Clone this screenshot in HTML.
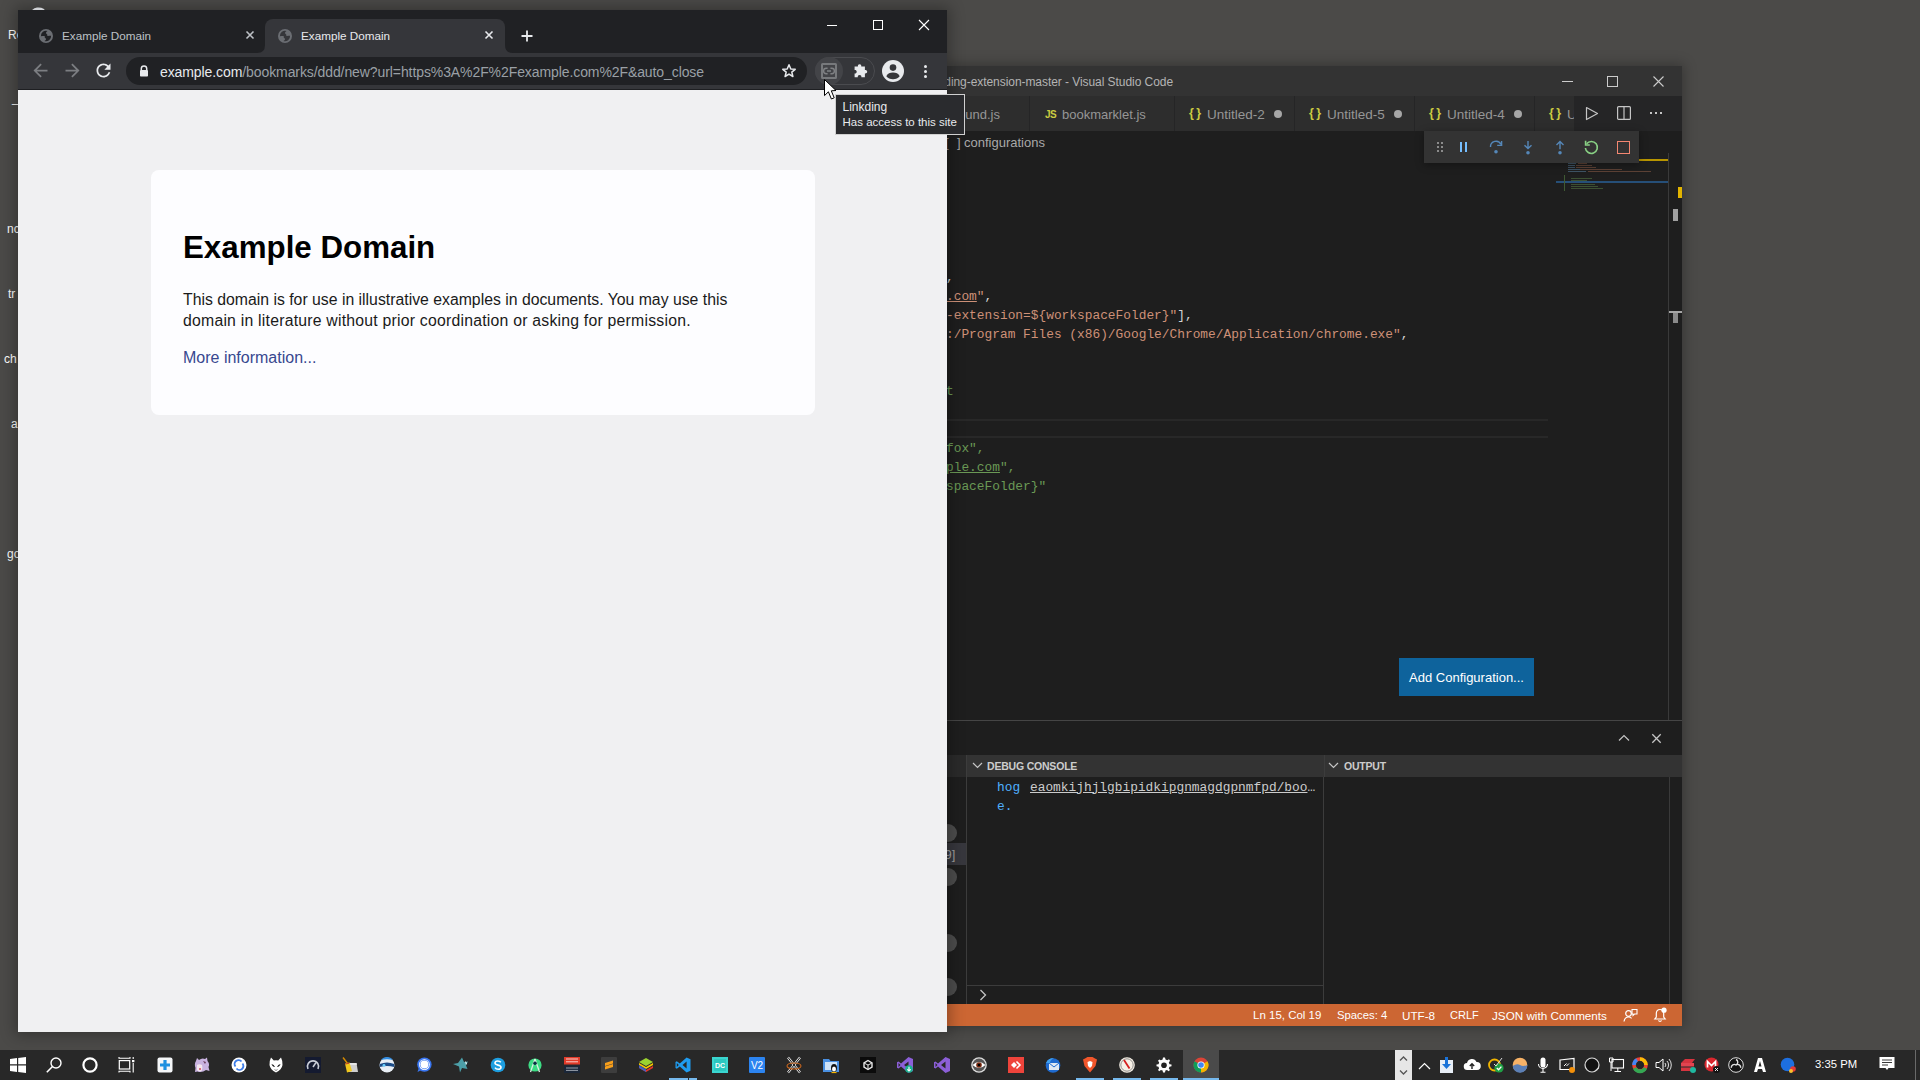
<!DOCTYPE html>
<html><head><meta charset="utf-8">
<style>
*{margin:0;padding:0;box-sizing:border-box}
html,body{width:1920px;height:1080px;overflow:hidden;background:#4b4a48;font-family:"Liberation Sans",sans-serif}
.a{position:absolute}
.t{position:absolute;white-space:nowrap;line-height:1}
.mono{font-family:"Liberation Mono",monospace}
svg{position:absolute;overflow:visible}
</style></head><body>

<div class="a" style="left:0;top:0;width:1920px;height:1050px;background:#4b4a48"></div>
<div class="t" style="left:8px;top:29px;font-size:12px;color:#fff">Re</div>
<div class="t" style="left:12px;top:92px;font-size:12px;color:#fff">_</div>
<div class="t" style="left:7px;top:223px;font-size:12px;color:#fff">nc</div>
<div class="t" style="left:8px;top:288px;font-size:12px;color:#fff">tr</div>
<div class="t" style="left:4px;top:353px;font-size:12px;color:#fff">ch</div>
<div class="t" style="left:11px;top:418px;font-size:12px;color:#fff">a</div>
<div class="t" style="left:7px;top:548px;font-size:12px;color:#fff">go</div>
<div class="a" style="left:947px;top:66px;width:735px;height:960px;box-shadow:0 0 12px 2px rgba(0,0,0,.28)"></div>
<div id="vsc" class="a" style="left:900px;top:66px;width:782px;height:960px;background:#1e1e1e;overflow:hidden">
<div class="a" style="left:0;top:0;width:782px;height:30px;background:#333333"></div>
<div class="t" style="left:-27px;top:9.5px;font-size:12px;color:#b4b4b4;width:300px;text-align:right;letter-spacing:-0.06px">ding-extension-master - Visual Studio Code</div>
<div class="a" style="left:662px;top:15px;width:11px;height:1px;background:#cccccc"></div>
<div class="a" style="left:707px;top:10px;width:11px;height:11px;border:1px solid #cccccc"></div>
<svg style="left:753px;top:10px" width="11" height="11"><path d="M0.5 0.5 L10.5 10.5 M10.5 0.5 L0.5 10.5" stroke="#cccccc" stroke-width="1.1"/></svg>
<div class="a" style="left:0;top:30px;width:782px;height:35px;background:#252526"></div>
<div class="a" style="left:1px;top:30px;width:129px;height:35px;background:#2d2d2d;border-right:1px solid #252526"></div>
<div class="a" style="left:130px;top:30px;width:145px;height:35px;background:#2d2d2d;border-right:1px solid #252526"></div>
<div class="a" style="left:275px;top:30px;width:120px;height:35px;background:#2d2d2d;border-right:1px solid #252526"></div>
<div class="a" style="left:395px;top:30px;width:120px;height:35px;background:#2d2d2d;border-right:1px solid #252526"></div>
<div class="a" style="left:515px;top:30px;width:120px;height:35px;background:#2d2d2d;border-right:1px solid #252526"></div>
<div class="a" style="left:635px;top:30px;width:40px;height:35px;background:#2d2d2d;border-right:1px solid #252526"></div>
<div class="t" style="left:-100px;width:200px;text-align:right;top:42.2px;font-size:13px;color:#969696">background.js</div>
<div class="t" style="left:145px;top:43.7px;font-size:10px;font-weight:bold;color:#cbcb41;letter-spacing:-0.5px">JS</div>
<div class="t" style="left:162px;top:42.2px;font-size:13px;color:#969696">bookmarklet.js</div>
<div class="t" style="left:289px;top:40.7px;font-size:12.5px;color:#cbcb41;letter-spacing:2.5px;font-weight:bold">{}</div>
<div class="t" style="left:307px;top:42.2px;font-size:13.5px;color:#969696">Untitled-2</div>
<div class="a" style="left:374px;top:44px;width:8px;height:8px;border-radius:4px;background:#a6a6a6"></div>
<div class="t" style="left:409px;top:40.7px;font-size:12.5px;color:#cbcb41;letter-spacing:2.5px;font-weight:bold">{}</div>
<div class="t" style="left:427px;top:42.2px;font-size:13.5px;color:#969696">Untitled-5</div>
<div class="a" style="left:494px;top:44px;width:8px;height:8px;border-radius:4px;background:#a6a6a6"></div>
<div class="t" style="left:529px;top:40.7px;font-size:12.5px;color:#cbcb41;letter-spacing:2.5px;font-weight:bold">{}</div>
<div class="t" style="left:547px;top:42.2px;font-size:13.5px;color:#969696">Untitled-4</div>
<div class="a" style="left:614px;top:44px;width:8px;height:8px;border-radius:4px;background:#a6a6a6"></div>
<div class="t" style="left:649px;top:40.7px;font-size:12.5px;color:#cbcb41;letter-spacing:2.5px;font-weight:bold">{}</div>
<div class="a" style="left:667px;top:30px;width:7px;height:35px;overflow:hidden"><div class="t" style="left:0;top:12.200000000000003px;font-size:13.5px;color:#969696">Untitled-3</div></div>
<div class="a" style="left:674px;top:30px;width:108px;height:35px;background:#252526"></div>
<svg style="left:685px;top:40px" width="14" height="15" viewBox="0 0 14 15"><path d="M1.5 1.5 L12.5 7.5 L1.5 13.5 Z" fill="none" stroke="#c5c5c5" stroke-width="1.2" stroke-linejoin="round"/></svg>
<svg style="left:717px;top:40px" width="14" height="14" viewBox="0 0 14 14"><rect x="0.6" y="0.6" width="12.8" height="12.8" rx="1" fill="none" stroke="#c5c5c5" stroke-width="1.2"/><path d="M7 0.6 V13.4" stroke="#c5c5c5" stroke-width="1.2"/></svg>
<div class="a" style="left:750px;top:46px;width:2.2px;height:2.2px;background:#c5c5c5"></div>
<div class="a" style="left:755px;top:46px;width:2.2px;height:2.2px;background:#c5c5c5"></div>
<div class="a" style="left:760px;top:46px;width:2.2px;height:2.2px;background:#c5c5c5"></div>
<div class="a" style="left:0;top:65px;width:782px;height:654px;background:#1e1e1e"></div>
<div class="t" style="left:45px;top:69.5px;font-size:13px;color:#a9a9a9">[</div>
<div class="t" style="left:57px;top:69.5px;font-size:13px;color:#a9a9a9">]</div>
<div class="t" style="left:64px;top:69.5px;font-size:13px;color:#a9a9a9">configurations</div>
<div class="a" style="left:0;top:353px;width:648px;height:19px;border-top:2px solid #282828;border-bottom:2px solid #282828"></div>
<div class="t mono" style="left:46px;top:205.7px;font-size:12.85px;color:#d4d4d4">,</div>
<div class="t mono" style="left:46px;top:224.7px;font-size:12.85px;color:#ce9178"><span style="text-decoration:underline">.com</span>"<span style="color:#d4d4d4">,</span></div>
<div class="t mono" style="left:46px;top:243.7px;font-size:12.85px;color:#ce9178">-extension=${workspaceFolder}"<span style="color:#d4d4d4">],</span></div>
<div class="t mono" style="left:46px;top:262.7px;font-size:12.85px;color:#ce9178">:/Program Files (x86)/Google/Chrome/Application/chrome.exe"<span style="color:#d4d4d4">,</span></div>
<div class="t mono" style="left:46px;top:319.7px;font-size:12.85px;color:#6a9955">t</div>
<div class="t mono" style="left:46px;top:376.7px;font-size:12.85px;color:#6a9955">fox",</div>
<div class="t mono" style="left:46px;top:395.7px;font-size:12.85px;color:#6a9955"><span style="text-decoration:underline">ple.com</span>",</div>
<div class="t mono" style="left:46px;top:414.7px;font-size:12.85px;color:#6a9955">spaceFolder}"</div>
<div class="a" style="left:656px;top:93px;width:112px;height:2px;background:#b89500"></div>
<div class="a" style="left:656px;top:115px;width:112px;height:2px;background:#264f78"></div>
<div class="a" style="left:668px;top:97px;width:8px;height:1px;background:#5a7f9e;opacity:.55"></div>
<div class="a" style="left:678px;top:97px;width:9px;height:1px;background:#8f5f48;opacity:.55"></div>
<div class="a" style="left:668px;top:99px;width:7px;height:1px;background:#5a7f9e;opacity:.55"></div>
<div class="a" style="left:676px;top:99px;width:16px;height:1px;background:#8f5f48;opacity:.55"></div>
<div class="a" style="left:668px;top:101px;width:7px;height:1px;background:#5a7f9e;opacity:.55"></div>
<div class="a" style="left:676px;top:101px;width:20px;height:1px;background:#8f5f48;opacity:.55"></div>
<div class="a" style="left:668px;top:103px;width:12px;height:1px;background:#5a7f9e;opacity:.55"></div>
<div class="a" style="left:680px;top:103px;width:42px;height:1px;background:#8f5f48;opacity:.55"></div>
<div class="a" style="left:668px;top:105px;width:18px;height:1px;background:#5a7f9e;opacity:.55"></div>
<div class="a" style="left:688px;top:105px;width:63px;height:1px;background:#8f5f48;opacity:.55"></div>
<div class="a" style="left:671px;top:112px;width:21px;height:1px;background:#557a44;opacity:.55"></div>
<div class="a" style="left:671px;top:114px;width:16px;height:1px;background:#557a44;opacity:.55"></div>
<div class="a" style="left:671px;top:118px;width:24px;height:1px;background:#557a44;opacity:.55"></div>
<div class="a" style="left:671px;top:120px;width:27px;height:1px;background:#557a44;opacity:.55"></div>
<div class="a" style="left:671px;top:122px;width:32px;height:1px;background:#557a44;opacity:.55"></div>
<div class="a" style="left:664px;top:109px;width:1px;height:16px;background:#3f5a33"></div>
<div class="a" style="left:768px;top:87px;width:1px;height:567px;background:#3a3a3a"></div>
<div class="a" style="left:778px;top:121px;width:4px;height:11px;background:#e2b400"></div>
<div class="a" style="left:773px;top:143px;width:5px;height:12px;background:#a0a0a0"></div>
<div class="a" style="left:769px;top:245px;width:13px;height:2px;background:#a6a6a6"></div>
<div class="a" style="left:773px;top:247px;width:5px;height:10px;background:#8a8a8a"></div>
<div class="a" style="left:524px;top:65px;width:215px;height:32px;background:#333333;box-shadow:0 2px 8px rgba(0,0,0,.36)"></div>
<div class="a" style="left:537px;top:76px;width:2px;height:2px;background:#8b8b8b"></div>
<div class="a" style="left:537px;top:80px;width:2px;height:2px;background:#8b8b8b"></div>
<div class="a" style="left:537px;top:84px;width:2px;height:2px;background:#8b8b8b"></div>
<div class="a" style="left:541px;top:76px;width:2px;height:2px;background:#8b8b8b"></div>
<div class="a" style="left:541px;top:80px;width:2px;height:2px;background:#8b8b8b"></div>
<div class="a" style="left:541px;top:84px;width:2px;height:2px;background:#8b8b8b"></div>
<div class="a" style="left:559.5px;top:76px;width:2.2px;height:10px;background:#75beff"></div>
<div class="a" style="left:565px;top:76px;width:2.2px;height:10px;background:#75beff"></div>
<svg style="left:587.5px;top:73px" width="16" height="16" viewBox="0 0 16 16"><path d="M2.5 8 A5.5 5.5 0 0 1 13 5.5" fill="none" stroke="#5587b8" stroke-width="1.4"/><path d="M13.6 2 V6.4 H9.2" fill="none" stroke="#5587b8" stroke-width="1.4"/><circle cx="8" cy="12.8" r="1.8" fill="#5587b8"/></svg>
<svg style="left:619.5px;top:73.5px" width="16" height="16" viewBox="0 0 16 16"><path d="M8 1 V8.6 M4.5 5.2 L8 8.6 L11.5 5.2" fill="none" stroke="#5587b8" stroke-width="1.4"/><circle cx="8" cy="12.8" r="1.8" fill="#5587b8"/></svg>
<svg style="left:651.5px;top:73.5px" width="16" height="16" viewBox="0 0 16 16"><path d="M8 9.2 V1.6 M4.5 5 L8 1.6 L11.5 5" fill="none" stroke="#5587b8" stroke-width="1.4"/><circle cx="8" cy="12.8" r="1.8" fill="#5587b8"/></svg>
<svg style="left:683px;top:73px" width="16" height="16" viewBox="0 0 16 16"><path d="M3.6 4.8 A6 6 0 1 1 2.4 9" fill="none" stroke="#89d185" stroke-width="1.6"/><path d="M2.6 1.8 V6 H6.8" fill="none" stroke="#89d185" stroke-width="1.6"/></svg>
<div class="a" style="left:717px;top:75px;width:13px;height:12.5px;border:1.5px solid #f48771"></div>
<div class="a" style="left:499px;top:592px;width:135px;height:38px;background:#0e639c"></div>
<div class="t" style="left:499px;top:605px;width:135px;text-align:center;font-size:13px;color:#ffffff">Add Configuration...</div>
<div class="a" style="left:0;top:654px;width:782px;height:284px;background:#1e1e1e;border-top:1px solid #454545"></div>
<svg style="left:718px;top:668px" width="12" height="8"><path d="M1 6.5 L6 1.5 L11 6.5" fill="none" stroke="#c5c5c5" stroke-width="1.2"/></svg>
<svg style="left:751px;top:667px" width="11" height="11"><path d="M1.3 1.3 L9.7 9.7 M9.7 1.3 L1.3 9.7" stroke="#c5c5c5" stroke-width="1.3"/></svg>
<div class="a" style="left:0;top:689px;width:66px;height:22px;background:#2a2a2a"></div>
<div class="a" style="left:66px;top:689px;width:358px;height:22px;background:#333333;border-left:1px solid #3c3c3c"></div>
<div class="a" style="left:424px;top:689px;width:358px;height:22px;background:#333333;border-left:1px solid #3c3c3c"></div>
<svg style="left:72px;top:696px" width="11" height="7"><path d="M1 1 L5.5 5.5 L10 1" fill="none" stroke="#c5c5c5" stroke-width="1.2"/></svg>
<div class="t" style="left:87px;top:694.5px;font-size:10.5px;font-weight:bold;color:#cccccc;letter-spacing:-0.2px">DEBUG CONSOLE</div>
<svg style="left:428px;top:696px" width="11" height="7"><path d="M1 1 L5.5 5.5 L10 1" fill="none" stroke="#c5c5c5" stroke-width="1.2"/></svg>
<div class="t" style="left:444px;top:694.5px;font-size:10.5px;font-weight:bold;color:#cccccc;letter-spacing:-0.2px">OUTPUT</div>
<div class="a" style="left:66px;top:711px;width:1px;height:227px;background:#3c3c3c"></div>
<div class="a" style="left:423px;top:711px;width:1px;height:227px;background:#3c3c3c"></div>
<div class="a" style="left:66px;top:919px;width:357px;height:1px;background:#3c3c3c"></div>
<div class="a" style="left:769px;top:711px;width:1px;height:227px;background:#3a3a3a"></div>
<div class="a" style="left:0;top:777px;width:66px;height:22px;background:#37373d"></div>
<div class="t" style="left:41px;top:781.5px;font-size:13px;color:#a0a0a0">[9]</div>
<div class="a" style="left:39px;top:758px;width:18px;height:18px;border-radius:9px;background:#4d4d4d"></div>
<div class="a" style="left:39px;top:802px;width:18px;height:18px;border-radius:9px;background:#4d4d4d"></div>
<div class="a" style="left:39px;top:868px;width:18px;height:18px;border-radius:9px;background:#4d4d4d"></div>
<div class="a" style="left:39px;top:912px;width:18px;height:18px;border-radius:9px;background:#4d4d4d"></div>
<div class="t mono" style="left:97px;top:715.7px;font-size:12.85px;color:#4fb0ff">hog</div>
<div class="t mono" style="left:130px;top:715.7px;font-size:12.85px;color:#cccccc"><span style="text-decoration:underline">eaomkijhjlgbipidkipgnmagdgpnmfpd/boo</span>…</div>
<div class="t mono" style="left:97px;top:734.7px;font-size:12.85px;color:#4fb0ff">e.</div>
<svg style="left:79px;top:923px" width="8" height="12"><path d="M1.5 1 L6.5 6 L1.5 11" fill="none" stroke="#c5c5c5" stroke-width="1.3"/></svg>
<div class="a" style="left:0;top:938px;width:782px;height:22px;background:#cc6633"></div>
<div class="t" style="left:353px;top:943.76525px;font-size:11.5px;color:#ffffff">Ln 15, Col 19</div>
<div class="t" style="left:437px;top:943.76525px;font-size:11.3px;color:#ffffff">Spaces: 4</div>
<div class="t" style="left:502px;top:943.76525px;font-size:11.7px;color:#ffffff">UTF-8</div>
<div class="t" style="left:550px;top:943.76525px;font-size:11px;color:#ffffff">CRLF</div>
<div class="t" style="left:592px;top:943.76525px;font-size:11.7px;color:#ffffff">JSON with Comments</div>
<svg style="left:723px;top:942px" width="15" height="15" viewBox="0 0 15 15"><circle cx="5.5" cy="5.5" r="2.8" fill="none" stroke="#fff" stroke-width="1.2"/><path d="M1 13.5 C1.5 10.5 3.5 9 5.5 9 C7 9 8 9.6 8.6 10.4" fill="none" stroke="#fff" stroke-width="1.2"/><path d="M9 1.5 H14 V6 H11.5 L10 7.5 V6 H9 Z" fill="none" stroke="#fff" stroke-width="1.1"/></svg>
<svg style="left:753px;top:941px" width="15" height="16" viewBox="0 0 15 16"><path d="M7 2.5 C4.5 2.5 3.3 4.3 3.3 6.5 V10 L1.8 12 H12.2 L10.7 10 V6.5 C10.7 4.3 9.5 2.5 7 2.5Z" fill="none" stroke="#fff" stroke-width="1.2"/><path d="M5.5 13.4 A1.6 1.6 0 0 0 8.5 13.4" fill="none" stroke="#fff" stroke-width="1.2"/><circle cx="11" cy="3.2" r="2.6" fill="#fff"/></svg>
</div>

<div class="a" style="left:18px;top:10px;width:929px;height:1022px;box-shadow:0 0 14px 3px rgba(0,0,0,.30)"></div>
<div id="chr" class="a" style="left:18px;top:10px;width:929px;height:1022px;background:#f0f0f2;overflow:hidden">
  <div class="a" style="left:0;top:0;width:929px;height:43px;background:#202124"></div>
  <div class="a" style="left:0;top:43px;width:929px;height:37px;background:#35363a"></div>
  <div class="a" style="left:0;top:79px;width:929px;height:1px;background:#1e1f22"></div>
  <!-- active tab -->
  <div class="a" style="left:247px;top:9px;width:240px;height:36px;background:#35363a;border-radius:8px 8px 0 0"></div>
  <svg style="left:239px;top:35px" width="8" height="8"><path d="M0 8 Q8 8 8 0 L8 8 Z" fill="#35363a"/></svg>
  <svg style="left:487px;top:35px" width="8" height="8"><path d="M8 8 Q0 8 0 0 L0 8 Z" fill="#35363a"/></svg>
  <!-- tab1 -->
  <svg style="left:21px;top:19px" width="14" height="14" viewBox="0 0 14 14"><circle cx="7" cy="7" r="7" fill="#6b6e73"/><path d="M1.9 7.2 A5.2 5.2 0 0 1 8.6 1.9 C7.4 2.6 6.6 3.6 7.2 4.6 C7.8 5.4 8.8 5.6 8.4 6.6 C8 7.3 6.6 7.1 5.2 7.1 C4 7.1 2.9 7.2 1.9 7.2Z" fill="#202124"/><path d="M12.1 6.8 A5.2 5.2 0 0 1 5.4 12.1 C6.6 11.4 7.4 10.4 6.8 9.4 C6.2 8.6 5.2 8.4 5.6 7.4 C6 6.7 7.4 6.9 8.8 6.9 C10 6.9 11.1 6.8 12.1 6.8Z" fill="#202124"/></svg>
  <div class="t" style="left:44px;top:20px;font-size:11.7px;color:#bdc1c6">Example Domain</div>
  <svg style="left:227px;top:20px" width="10" height="10"><path d="M1.5 1.5 L8.5 8.5 M8.5 1.5 L1.5 8.5" stroke="#bdc1c6" stroke-width="1.6"/></svg>
  <!-- tab2 -->
  <svg style="left:260px;top:19px" width="14" height="14" viewBox="0 0 14 14"><circle cx="7" cy="7" r="7" fill="#6b6e73"/><path d="M1.9 7.2 A5.2 5.2 0 0 1 8.6 1.9 C7.4 2.6 6.6 3.6 7.2 4.6 C7.8 5.4 8.8 5.6 8.4 6.6 C8 7.3 6.6 7.1 5.2 7.1 C4 7.1 2.9 7.2 1.9 7.2Z" fill="#35363a"/><path d="M12.1 6.8 A5.2 5.2 0 0 1 5.4 12.1 C6.6 11.4 7.4 10.4 6.8 9.4 C6.2 8.6 5.2 8.4 5.6 7.4 C6 6.7 7.4 6.9 8.8 6.9 C10 6.9 11.1 6.8 12.1 6.8Z" fill="#35363a"/></svg>
  <div class="t" style="left:283px;top:20px;font-size:11.7px;color:#e8eaed">Example Domain</div>
  <svg style="left:466px;top:20px" width="10" height="10"><path d="M1.5 1.5 L8.5 8.5 M8.5 1.5 L1.5 8.5" stroke="#e8eaed" stroke-width="1.6"/></svg>
  <!-- new tab -->
  <svg style="left:503px;top:20px" width="12" height="12"><path d="M6 0.5 V11.5 M0.5 6 H11.5" stroke="#e8eaed" stroke-width="1.8"/></svg>
  <!-- window controls -->
  <div class="a" style="left:809px;top:15px;width:10px;height:1px;background:#fff"></div>
  <div class="a" style="left:855px;top:10px;width:10px;height:10px;border:1px solid #fff"></div>
  <svg style="left:901px;top:10px" width="10" height="10"><path d="M0 0 L10 10 M10 0 L0 10" stroke="#fff" stroke-width="1.1"/></svg>
  <!-- nav -->
  <svg style="left:11.5px;top:50.25px" width="21" height="21" viewBox="0 0 24 24"><path d="M20 11H7.83l5.59-5.59L12 4l-8 8 8 8 1.41-1.41L7.83 13H20v-2z" fill="#7c7e82"/></svg>
  <svg style="left:43.5px;top:50.25px" width="21" height="21" viewBox="0 0 24 24"><path d="M12 4l-1.41 1.41L16.17 11H4v2h12.17l-5.58 5.59L12 20l8-8z" fill="#7c7e82"/></svg>
  <svg style="left:75px;top:50px" width="21" height="21" viewBox="0 0 24 24"><path d="M17.65 6.35C16.2 4.9 14.21 4 12 4c-4.42 0-7.99 3.58-7.99 8s3.57 8 7.99 8c3.73 0 6.84-2.55 7.73-6h-2.08c-.82 2.33-3.04 4-5.650 4-3.31 0-6-2.69-6-6s2.69-6 6-6c1.66 0 3.14.69 4.22 1.78L13 11h7V4l-2.35 2.35z" fill="#e8eaed"/></svg>
  <!-- omnibox -->
  <div class="a" style="left:108px;top:47px;width:681px;height:28px;background:#202124;border-radius:14px"></div>
  <svg style="left:121px;top:54.5px" width="10" height="12" viewBox="0 0 10 12"><path d="M2.3 5 V3.6 A2.7 2.7 0 0 1 7.7 3.6 V5" fill="none" stroke="#e8eaed" stroke-width="1.5"/><rect x="1" y="5" width="8" height="6.5" rx="0.8" fill="#e8eaed"/></svg>
  <div class="t" style="left:142px;top:54.7px;font-size:14px;letter-spacing:-0.09px;color:#9aa0a6"><span style="color:#e8eaed">example.com</span>/bookmarks/ddd/new?url=https%3A%2F%2Fexample.com%2F&amp;auto_close</div>
  <svg style="left:763px;top:53px" width="16" height="16" viewBox="0 0 16 16"><path d="M8 1.8 L9.8 6 L14.2 6.3 L10.8 9.1 L11.9 13.5 L8 11.1 L4.1 13.5 L5.2 9.1 L1.8 6.3 L6.2 6 Z" fill="none" stroke="#e8eaed" stroke-width="1.5" stroke-linejoin="round"/></svg>
  <!-- extensions -->
  <div class="a" style="left:797px;top:47px;width:60px;height:28px;border:1px solid #4a4b4f;border-radius:14px"></div>
  <div class="a" style="left:797px;top:47px;width:28px;height:28px;background:#434448;border-radius:14px"></div>
  <div class="a" style="left:803px;top:53px;width:16px;height:16px;border:2px solid #77797c;border-radius:1.5px"></div>
  <svg style="left:805px;top:57px" width="12" height="8" viewBox="0 0 12 8"><path d="M4.6 1.3 H3.3 A2.7 2.7 0 0 0 3.3 6.7 H4.6 M7.4 1.3 H8.7 A2.7 2.7 0 0 1 8.7 6.7 H7.4 M4 4 H8" fill="none" stroke="#7f8184" stroke-width="1.4"/></svg>
  <svg style="left:835px;top:53px" width="16" height="16" viewBox="0 0 16 16"><path d="M6.6 1.3 C7.8 1.3 8.4 2.2 8.3 3.4 H11.9 V7 C13.1 6.9 14.2 7.4 14.2 8.7 C14.2 10 13.1 10.5 11.9 10.4 V14.2 H8.4 C8.5 13 7.9 12.1 6.6 12.1 C5.3 12.1 4.7 13 4.8 14.2 H1.6 V10.5 C2.8 10.6 3.7 10 3.7 8.7 C3.7 7.4 2.8 6.8 1.6 6.9 V3.4 H4.9 C4.8 2.2 5.4 1.3 6.6 1.3Z" fill="#e8eaed"/></svg>
  <svg style="left:864px;top:50px" width="22" height="22" viewBox="0 0 22 22"><circle cx="11" cy="11" r="11" fill="#e8eaed"/><circle cx="11" cy="7.6" r="3.3" fill="#35363a"/><path d="M4.3 16.3 C5.5 13.4 8 12.4 11 12.4 C14 12.4 16.5 13.4 17.7 16.3 C16.2 18.2 13.8 19.3 11 19.3 C8.2 19.3 5.8 18.2 4.3 16.3Z" fill="#35363a"/></svg>
  <div class="a" style="left:906px;top:55px;width:3px;height:3px;border-radius:2px;background:#e8eaed"></div>
  <div class="a" style="left:906px;top:60px;width:3px;height:3px;border-radius:2px;background:#e8eaed"></div>
  <div class="a" style="left:906px;top:65px;width:3px;height:3px;border-radius:2px;background:#e8eaed"></div>
  <!-- page -->
  <div class="a" style="left:133px;top:160px;width:664px;height:245px;background:#fdfdff;border-radius:8px"></div>
  <div class="t" style="left:165px;top:221.5px;font-size:31.3px;font-weight:bold;color:#000">Example Domain</div>
  <div class="t" style="left:165px;top:281.6px;font-size:15.8px;color:#1a1a1a">This domain is for use in illustrative examples in documents. You may use this</div>
  <div class="t" style="left:165px;top:302.6px;font-size:15.8px;letter-spacing:0.22px;color:#1a1a1a">domain in literature without prior coordination or asking for permission.</div>
  <div class="t" style="left:165px;top:339.5px;font-size:16px;color:#38488f">More information...</div>
</div>


<div class="a" style="left:835px;top:94px;width:130px;height:41px;background:#2a2b2e;border:1px solid #d0d0d0"></div>
<div class="t" style="left:842.5px;top:101px;font-size:12px;color:#e8eaed">Linkding</div>
<div class="t" style="left:842.5px;top:117.3px;font-size:11.5px;color:#e8eaed">Has access to this site</div>
<svg style="left:824px;top:79px" width="13" height="22" viewBox="0 0 13 22"><path d="M0.5 0.5 V16.6 L4.4 12.8 L7.4 20 L10.2 18.8 L7.3 11.8 L12 11.5 Z" fill="#fff" stroke="#000" stroke-width="1"/></svg>

<svg style="left:31px;top:6.5px;overflow:hidden" width="14" height="3.5" viewBox="0 0 14 3.5"><path d="M0.5 3.5 Q3 1.2 6 0.6 Q10 0.2 12.5 1.8 Q13.5 2.6 14 3.5 Z" fill="#d0d2d6"/></svg>

<div id="tb" class="a" style="left:0;top:1050px;width:1920px;height:30px;background:#282828">
<div class="a" style="left:1183px;top:0;width:36px;height:30px;background:#4a4a4a"></div>
<div class="a" style="left:669px;top:28px;width:19px;height:2px;background:#76b9ed"></div>
<div class="a" style="left:688px;top:28px;width:9px;height:2px;background:#76b9ed"></div>
<div class="a" style="left:1076px;top:28px;width:28px;height:2px;background:#76b9ed"></div>
<div class="a" style="left:1113px;top:28px;width:28px;height:2px;background:#76b9ed"></div>
<div class="a" style="left:1150px;top:28px;width:28px;height:2px;background:#76b9ed"></div>
<div class="a" style="left:1183px;top:28px;width:36px;height:2px;background:#76b9ed"></div>
<div class="a" style="left:688px;top:28px;width:1px;height:2px;background:#282828"></div>
<svg style="left:10.0px;top:7.0px" width="16" height="16" viewBox="0 0 16 16"><path d="M0 2 L7 1 V7.3 H0 Z M8.2 0.9 L16 0 V7.3 H8.2 Z M0 8.5 H7 V15 L0 14 Z M8.2 8.5 H16 V16 L8.2 15.1 Z" fill="#fff"/></svg>
<svg style="left:46.0px;top:7.0px" width="16" height="16" viewBox="0 0 16 16"><circle cx="10" cy="6" r="5" fill="none" stroke="#fff" stroke-width="1.4"/><path d="M6.5 9.5 L0.8 15.2" stroke="#fff" stroke-width="1.6"/></svg>
<svg style="left:82.0px;top:7.0px" width="16" height="16" viewBox="0 0 16 16"><circle cx="8" cy="8" r="6.6" fill="none" stroke="#fff" stroke-width="2.2"/></svg>
<svg style="left:118.0px;top:7.0px" width="16" height="16" viewBox="0 0 16 16"><path d="M1 0 V1.2 H12 V0 M1 15.5 V14.3 H12 V15.5 M15.2 0 V2 M15.2 6 V15.5" fill="none" stroke="#fff" stroke-width="1.1"/><rect x="1.3" y="3.6" width="10.4" height="8.4" fill="none" stroke="#fff" stroke-width="1.2"/><rect x="14" y="3" width="2.4" height="2.2" fill="#fff"/></svg>
<svg style="left:157.0px;top:7.0px" width="16" height="16" viewBox="0 0 16 16"><rect x="0.5" y="0.5" width="15" height="15" rx="2" fill="#f4f6f8"/><path d="M8 3 V13 M3 8 H13" stroke="#1e90e0" stroke-width="3.2"/></svg>
<svg style="left:194.0px;top:7.0px" width="16" height="16" viewBox="0 0 16 16"><path d="M3 1 L5 3 Q8 0.5 11 2 L13 0.5 L13.5 4 Q16 7 14.5 10 L15.5 14 L12 13 Q8 16 3.5 14.5 L1 15 L1.5 11 Q0 7 2 4 Z" fill="#c9b3e0"/><path d="M3 8 Q5 6.5 8 8 Q9 11 7.5 14 Q4.5 15 3 13 Z" fill="#f4e6ee"/><path d="M9 4 L12 5 L11 7 Z" fill="#6a3a5a"/><circle cx="6" cy="12" r="1" fill="#d04a5a"/></svg>
<svg style="left:231.0px;top:7.0px" width="16" height="16" viewBox="0 0 16 16"><circle cx="8" cy="8" r="7.5" fill="#fff"/><path d="M4.5 9.5 A3.8 3.8 0 0 1 10.5 4.5 M11.5 6.5 A3.8 3.8 0 0 1 5.5 11.5" fill="none" stroke="#3d7de8" stroke-width="1.9"/></svg>
<svg style="left:268.0px;top:7.0px" width="16" height="16" viewBox="0 0 16 16"><path d="M3 0.5 L5.8 3.5 Q8 3 10.2 3.5 L13 0.5 Q14.8 4 14.5 8 Q13.8 12.5 8 15.5 Q2.2 12.5 1.5 8 Q1.2 4 3 0.5Z" fill="#fff"/><path d="M3.5 7 Q6 7.5 7 10 Q4.5 10 3.5 7Z M12.5 7 Q10 7.5 9 10 Q11.5 10 12.5 7Z" fill="#111"/><path d="M6.5 12.5 L8 13.5 L9.5 12.5" fill="none" stroke="#555" stroke-width="0.7"/></svg>
<svg style="left:305.0px;top:7.0px" width="16" height="16" viewBox="0 0 16 16"><rect x="0" y="0" width="16" height="16" fill="#141a30"/><path d="M3 12 A5.6 5.6 0 1 1 13 12" fill="none" stroke="#c9ced8" stroke-width="1.6"/><path d="M8 10 L11 5.5" stroke="#c9ced8" stroke-width="1.5"/></svg>
<svg style="left:342.0px;top:7.0px" width="16" height="16" viewBox="0 0 16 16"><path d="M6 6 H14.5 L16 15 H7 Z" fill="#cfcfcf"/><path d="M7 6 H14.5 L14.8 8 H7.3Z" fill="#e6e6e6"/><path d="M1 0.5 L5.5 6.5" stroke="#d58a00" stroke-width="1.4"/><path d="M3 6.5 L7.5 5.5 L10 14 L5 15.5 Z" fill="#f2c81c"/><path d="M3.3 7 L7.3 6.2" stroke="#c0392b" stroke-width="1"/></svg>
<svg style="left:379.0px;top:7.0px" width="16" height="16" viewBox="0 0 16 16"><circle cx="8" cy="8" r="7.5" fill="#e8eef5"/><path d="M0.8 7 Q8 4 15.2 7 V10 Q8 8 0.8 10Z" fill="#1c4c88"/><circle cx="5" cy="8.3" r="1.4" fill="#6ad0ff"/><path d="M2 3 A7.5 7.5 0 0 1 14 3 Q8 1.5 2 3Z" fill="#2f8de4"/></svg>
<svg style="left:416.0px;top:7.0px" width="16" height="16" viewBox="0 0 16 16"><circle cx="8.4" cy="7.6" r="7.2" fill="#3a76f0"/><path d="M1.5 15 L3 10.5 L5.5 13 Z" fill="#3a76f0"/><circle cx="8.4" cy="7.6" r="5.4" fill="#fff"/><circle cx="8.4" cy="7.6" r="4.6" fill="#3a76f0"/><circle cx="8.4" cy="7.6" r="4" fill="#fff"/></svg>
<svg style="left:453.0px;top:7.0px" width="16" height="16" viewBox="0 0 16 16"><path d="M0 7 L5 6 L9 0.5 L11 5 L15 4.5 L13 8.5 L14.5 12 L9 11 L7 15.5 L6 9.5 Z" fill="#4c9fa8"/><path d="M12 4 L14 6 L13 8" fill="#fff"/></svg>
<svg style="left:490.0px;top:7.0px" width="16" height="16" viewBox="0 0 16 16"><circle cx="8" cy="8" r="7.3" fill="#1d9ee0"/><path d="M10.8 5.3 C10 4.3 8.8 4 7.8 4 C6 4 5 5 5 6.1 C5 8.7 11 7.5 11 10.2 C11 11.4 9.9 12.2 8.2 12.2 C6.8 12.2 5.6 11.6 5 10.6" fill="none" stroke="#fff" stroke-width="1.6"/></svg>
<svg style="left:527.0px;top:7.0px" width="16" height="16" viewBox="0 0 16 16"><circle cx="8" cy="8" r="6.6" fill="#3ddc84"/><path d="M8 2 L3.5 15 M8 2 L12.5 15" stroke="#d8f0e0" stroke-width="1.3"/><circle cx="8" cy="6.2" r="1.8" fill="#073042"/></svg>
<svg style="left:564.0px;top:7.0px" width="16" height="16" viewBox="0 0 16 16"><rect x="0" y="0" width="16" height="7.5" fill="#e33b2a"/><rect x="0" y="8.5" width="16" height="7.5" fill="#1a2638"/><path d="M2 2 H14 M2 4.8 H14" stroke="#fff" stroke-width="0.9" opacity=".85"/><path d="M2 11 H14 M2 13.4 H14" stroke="#c9cfd8" stroke-width="0.9" opacity=".8"/></svg>
<svg style="left:601.0px;top:7.0px" width="16" height="16" viewBox="0 0 16 16"><rect x="0" y="0" width="16" height="16" rx="1" fill="#3d3d3d"/><path d="M4 6 L12 3.5 V6.5 L4 9 Z M4 9.5 L12 7 V10 L4 12.5 Z" fill="#f89f1b"/></svg>
<svg style="left:638.0px;top:7.0px" width="16" height="16" viewBox="0 0 16 16"><path d="M8 1 L15 5 L8 9 L1 5 Z" fill="#9bd330"/><path d="M1 6 L8 10 L15 6 V8 L8 12 L1 8 Z" fill="#f5c400"/><path d="M1 9 L8 13 L15 9 V11 L8 15 L1 11 Z" fill="#e3362a"/><path d="M1 8 L8 12 V15 L1 11Z" fill="#2b68d9" opacity=".8"/></svg>
<svg style="left:675.0px;top:7.0px" width="16" height="16" viewBox="0 0 16 16"><path d="M11.6 0.4 L15.5 2.3 V13.7 L11.6 15.6 L4.8 9.4 L1.8 11.7 L0.5 11 V5 L1.8 4.3 L4.8 6.6 Z M11.6 4.5 L7.5 8 L11.6 11.5 Z M1.8 6 V10 L3.8 8 Z" fill="#1f9cf0"/></svg>
<svg style="left:712.0px;top:7.0px" width="16" height="16" viewBox="0 0 16 16"><rect x="0" y="0" width="16" height="16" fill="#3ad6d0"/><rect x="2" y="2" width="12" height="12" fill="#1eb8b0" opacity=".5"/><text x="8" y="11" font-family="Liberation Sans" font-size="7" font-weight="bold" fill="#fff" text-anchor="middle">DC</text></svg>
<svg style="left:749.0px;top:7.0px" width="16" height="16" viewBox="0 0 16 16"><rect x="0" y="0" width="16" height="16" rx="1" fill="#2c84f0"/><text x="8" y="12" font-family="Liberation Sans" font-size="10" fill="#fff" text-anchor="middle">V2</text></svg>
<svg style="left:786.0px;top:7.0px" width="16" height="16" viewBox="0 0 16 16"><path d="M2 0.5 L14 15.5 M14 0.5 L2 15.5" stroke="#e8e8e8" stroke-width="2.4"/><path d="M2 0.5 L14 15.5 M14 0.5 L2 15.5" stroke="#111" stroke-width="1"/><ellipse cx="8" cy="9" rx="7" ry="3" fill="none" stroke="#c6651f" stroke-width="1.1"/></svg>
<svg style="left:823.0px;top:7.0px" width="16" height="16" viewBox="0 0 16 16"><path d="M0 2 H6 L7.5 4 H16 V15 H0 Z" fill="#4a90e2"/><rect x="2" y="5" width="12" height="8" fill="#cfe3f8"/><ellipse cx="11" cy="11" rx="3" ry="4" fill="#111"/><ellipse cx="11" cy="12" rx="2" ry="2.6" fill="#fff"/><path d="M8.5 15.5 H13.5" stroke="#f5b400" stroke-width="1.2"/></svg>
<svg style="left:860.0px;top:7.0px" width="16" height="16" viewBox="0 0 16 16"><rect x="0" y="0" width="16" height="16" fill="#0b0b0b"/><path d="M8 3.5 L12 6 V10 L8 12.5 L4 10 V6 Z" fill="none" stroke="#e8e8e8" stroke-width="1.4"/><path d="M4 6 L8 8 L12 6 M8 8 V12.5" stroke="#e8e8e8" stroke-width="1"/></svg>
<svg style="left:897.0px;top:7.0px" width="16" height="16" viewBox="0 0 16 16"><path d="M11.5 0 L16 2 V14 L11.5 16 L4 9.5 L1.5 11.5 L0 10.8 V5.2 L1.5 4.5 L4 6.5 Z M11.5 4.5 L7 8 L11.5 11.5 Z M1.5 6 V10 L3.5 8Z" fill="#8c5fd8"/><circle cx="12" cy="12" r="3.8" fill="#1bb18f"/><path d="M12 9.8 V13.8 M10.3 12.3 L12 14 L13.7 12.3" fill="none" stroke="#fff" stroke-width="1.1"/></svg>
<svg style="left:934.0px;top:7.0px" width="16" height="16" viewBox="0 0 16 16"><path d="M11.5 0 L16 2 V14 L11.5 16 L4 9.5 L1.5 11.5 L0 10.8 V5.2 L1.5 4.5 L4 6.5 Z M11.5 4.5 L7 8 L11.5 11.5 Z M1.5 6 V10 L3.5 8Z" fill="#8c5fd8"/></svg>
<svg style="left:971.0px;top:7.0px" width="16" height="16" viewBox="0 0 16 16"><circle cx="8" cy="8" r="7.8" fill="#ddd"/><circle cx="8" cy="8" r="6.5" fill="#555"/><path d="M1.5 8 Q8 2 14.5 8 Q8 14 1.5 8Z" fill="#fff"/><circle cx="8" cy="8" r="2.8" fill="#7a2a10"/><circle cx="8" cy="8" r="1.3" fill="#000"/></svg>
<svg style="left:1008.0px;top:7.0px" width="16" height="16" viewBox="0 0 16 16"><rect x="0" y="0" width="16" height="16" fill="#ef443b"/><path d="M3 8 L6 5 L9 8 L6 11 Z" fill="#fff"/><path d="M8.5 4.5 L12 8 L8.5 11.5" fill="none" stroke="#fff" stroke-width="1.6"/></svg>
<svg style="left:1045.0px;top:7.0px" width="16" height="16" viewBox="0 0 16 16"><circle cx="8" cy="8.5" r="7.3" fill="#1f6bd0"/><rect x="4" y="6" width="10" height="7" fill="#dfe8f3"/><path d="M4 6 L9 10 L14 6" fill="none" stroke="#1f6bd0" stroke-width="1"/><path d="M1 6 Q3 1 9 1 Q5 3 5 6" fill="#3fa0f0"/></svg>
<svg style="left:1082.0px;top:7.0px" width="16" height="16" viewBox="0 0 16 16"><path d="M3 1.5 L5.5 0 H10.5 L13 1.5 L15 2.5 L13.5 9 L8 15.5 L2.5 9 L1 2.5 Z" fill="#f1562b"/><path d="M5.5 5 L8 4 L10.5 5 L10 9 L8 11 L6 9 Z" fill="#fff"/></svg>
<svg style="left:1119.0px;top:7.0px" width="16" height="16" viewBox="0 0 16 16"><circle cx="8" cy="8" r="7.8" fill="#f6f0e6"/><circle cx="8" cy="8" r="6.2" fill="none" stroke="#777" stroke-width="0.8"/><path d="M5 3 L10.5 11.5" stroke="#d41f1f" stroke-width="1.8"/></svg>
<svg style="left:1156.0px;top:7.0px" width="16" height="16" viewBox="0 0 16 16"><path d="M7 0.5 H9 L9.5 2.5 L11.3 3.3 L13 2.2 L14 3.8 L12.8 5.4 L13.5 7.2 L15.5 7.5 V9.3 L13.5 9.7 L12.8 11.4 L14 13 L12.6 14.2 L11 13 L9.4 13.6 L9 15.5 H7 L6.6 13.6 L4.9 13 L3.3 14.2 L2 13 L3.1 11.4 L2.5 9.7 L0.5 9.3 V7.5 L2.5 7.2 L3.2 5.4 L2 3.8 L3.3 2.5 L4.9 3.3 L6.6 2.5 Z" fill="#fff"/><circle cx="8" cy="8.3" r="2.8" fill="#232323"/></svg>
<svg style="left:1193.0px;top:7.0px" width="16" height="16" viewBox="0 0 16 16"><circle cx="8" cy="8" r="7.5" fill="#db4437"/><path d="M8 8 L1.5 4.25 A7.5 7.5 0 0 0 8 15.5 Z" fill="#0f9d58"/><path d="M8 8 L8 15.5 A7.5 7.5 0 0 0 14.5 4.25 Z" fill="#f4b400"/><circle cx="8" cy="8" r="3.6" fill="#fff"/><circle cx="8" cy="8" r="2.8" fill="#4285f4"/></svg>
<div class="a" style="left:1395px;top:0;width:17px;height:30px;background:#e6e6e6"></div>
<svg style="left:1399.0px;top:6.0px" width="9" height="6" viewBox="0 0 9 6"><path d="M1 4.5 L4.5 1 L8 4.5" fill="none" stroke="#555" stroke-width="1.3"/></svg>
<svg style="left:1399.0px;top:19.0px" width="9" height="6" viewBox="0 0 9 6"><path d="M1 1.5 L4.5 5 L8 1.5" fill="none" stroke="#555" stroke-width="1.3"/></svg>
<svg style="left:1417.5px;top:12.0px" width="13" height="8" viewBox="0 0 13 8"><path d="M1 7 L6.5 1.5 L12 7" fill="none" stroke="#fff" stroke-width="1.2"/></svg>
<svg style="left:1439.0px;top:7.0px" width="16" height="16" viewBox="0 0 16 16"><rect x="1" y="3" width="13" height="13" fill="#e8eef6"/><path d="M7.5 0 V10" stroke="#1a73d9" stroke-width="3"/><path d="M3 7 L7.5 12 L12 7Z" fill="#1a73d9"/></svg>
<svg style="left:1464.0px;top:6.0px" width="16" height="16" viewBox="0 0 16 16"><path d="M3.5 14 A3.5 3.5 0 0 1 3 7 A5 5 0 0 1 12.5 6 A4 4 0 0 1 13 14 Z" fill="#fff"/><path d="M8 13 V8 M5.8 10 L8 7.8 L10.2 10" fill="none" stroke="#232323" stroke-width="1.4"/></svg>
<svg style="left:1488.0px;top:7.0px" width="16" height="16" viewBox="0 0 16 16"><circle cx="6.5" cy="8" r="5.5" fill="none" stroke="#f0b400" stroke-width="1.8"/><circle cx="11" cy="11" r="4.6" fill="#1fa045"/><path d="M8.8 11 L10.6 12.8 L13.4 9.6" fill="none" stroke="#fff" stroke-width="1.3"/><path d="M6 7 L8 9 L14 1" fill="none" stroke="#ddd" stroke-width="1"/></svg>
<svg style="left:1512.0px;top:7.0px" width="16" height="16" viewBox="0 0 16 16"><circle cx="8" cy="8" r="7.3" fill="#f7b267"/><path d="M0.7 9 Q5 6 8 8 Q11 10 15.3 8 A7.3 7.3 0 0 1 0.7 9Z" fill="#5b7fb6"/></svg>
<svg style="left:1535.0px;top:7.0px" width="16" height="16" viewBox="0 0 16 16"><rect x="5.5" y="0.5" width="5" height="10" rx="2.5" fill="#fff"/><path d="M3.5 7 A4.5 4.5 0 0 0 12.5 7" fill="none" stroke="#fff" stroke-width="1.1"/><path d="M8 11.5 V15 M5.5 15.3 H10.5" stroke="#fff" stroke-width="1.1"/></svg>
<svg style="left:1559.0px;top:7.0px" width="16" height="16" viewBox="0 0 16 16"><path d="M1 3 L15 1.5 V12.5 H1 Z" fill="none" stroke="#fff" stroke-width="1.2"/><path d="M5 9 L7.5 6.5 M7.5 9 L10 6.5" stroke="#fff" stroke-width="1"/><circle cx="13" cy="13" r="3" fill="#f5910a"/></svg>
<svg style="left:1584.0px;top:7.0px" width="16" height="16" viewBox="0 0 16 16"><circle cx="8" cy="8" r="7" fill="#111" stroke="#d8d8d8" stroke-width="1.2"/><path d="M10 14.8 Q12 12 15 11" fill="none" stroke="#d8d8d8" stroke-width="1"/></svg>
<svg style="left:1608.0px;top:7.0px" width="16" height="16" viewBox="0 0 16 16"><rect x="4" y="2.5" width="11.5" height="8.5" fill="none" stroke="#fff" stroke-width="1.1"/><path d="M9.8 11 V14 M6.5 14.5 H13 M1.5 1 H5 V5 H1.5 Z M3 5 V14" fill="none" stroke="#fff" stroke-width="1"/></svg>
<svg style="left:1632.0px;top:7.0px" width="16" height="16" viewBox="0 0 16 16"><circle cx="8" cy="8" r="6" fill="none" stroke="#ea4335" stroke-width="3.6"/><path d="M2.6 11 A6 6 0 0 0 13.4 11" fill="none" stroke="#34a853" stroke-width="3.6"/><path d="M14 8 A6 6 0 0 0 8 2" fill="none" stroke="#fbbc05" stroke-width="3.6"/><path d="M2 8 A6 6 0 0 1 5 2.8" fill="none" stroke="#4285f4" stroke-width="3.6"/><circle cx="8" cy="8" r="3" fill="#232323"/></svg>
<svg style="left:1654.5px;top:7.0px" width="17" height="16" viewBox="0 0 17 16"><path d="M1 5.5 H4 L8 2 V14 L4 10.5 H1 Z" fill="none" stroke="#fff" stroke-width="1"/><path d="M10 6 A3 3 0 0 1 10 10 M12 4 A6 6 0 0 1 12 12 M14 2 A9 9 0 0 1 14 14" fill="none" stroke="#fff" stroke-width="1" opacity=".85"/></svg>
<svg style="left:1680.0px;top:7.0px" width="16" height="16" viewBox="0 0 16 16"><path d="M1 6 L5 2 H15 L12 6 Z" fill="#d6343f"/><rect x="1" y="6" width="13" height="3.5" fill="#e24450"/><rect x="1" y="10.5" width="11" height="3.5" fill="#d6343f"/><circle cx="13" cy="13" r="3" fill="#1fb8a0"/></svg>
<svg style="left:1704.0px;top:7.0px" width="16" height="16" viewBox="0 0 16 16"><circle cx="7.5" cy="7.5" r="7" fill="#d9272e"/><path d="M3.5 10.5 V4.5 L7.5 8.5 L11.5 4.5 V10.5" fill="none" stroke="#fff" stroke-width="1.7"/><circle cx="12.5" cy="12.5" r="3.5" fill="#111"/><path d="M11 11 L14 14 M14 11 L11 14" stroke="#fff" stroke-width="0.9"/></svg>
<svg style="left:1728.0px;top:7.0px" width="16" height="16" viewBox="0 0 16 16"><circle cx="8" cy="8" r="7.3" fill="#151515" stroke="#e0e0e0" stroke-width="1"/><path d="M8 2.5 A3 3 0 0 1 8 8 A3 3 0 0 0 3.3 10.8 M8 8 A3 3 0 0 1 12.7 10.8" fill="none" stroke="#e0e0e0" stroke-width="1.4"/></svg>
<svg style="left:1752.0px;top:7.0px" width="16" height="16" viewBox="0 0 16 16"><path d="M6 1 H10 L14 15 H11 L10 12 H6 L5 15 H2 Z M6.5 9.5 H9.5 L8 4 Z" fill="#fff"/></svg>
<svg style="left:1780.0px;top:7.0px" width="16" height="16" viewBox="0 0 16 16"><circle cx="7.5" cy="7.5" r="6.8" fill="#1d6fe0"/><circle cx="13" cy="12" r="2.8" fill="#e53935"/><circle cx="11" cy="14" r="2" fill="#fbc02d"/></svg>
<div class="t" style="left:1815px;top:8.5px;font-size:11.3px;color:#ffffff">3:35 PM</div>
<svg style="left:1879.0px;top:6.0px" width="16" height="16" viewBox="0 0 16 16"><path d="M0.5 1 H15.5 V12 H9.5 L8 14 L6.5 12 H0.5 Z" fill="#fff"/><path d="M3 4 H13 M3 6.5 H13 M3 9 H9" stroke="#232323" stroke-width="0.9"/></svg>
<div class="a" style="left:1915px;top:0;width:1px;height:30px;background:#6a6a6a"></div>
</div>
</body></html>
